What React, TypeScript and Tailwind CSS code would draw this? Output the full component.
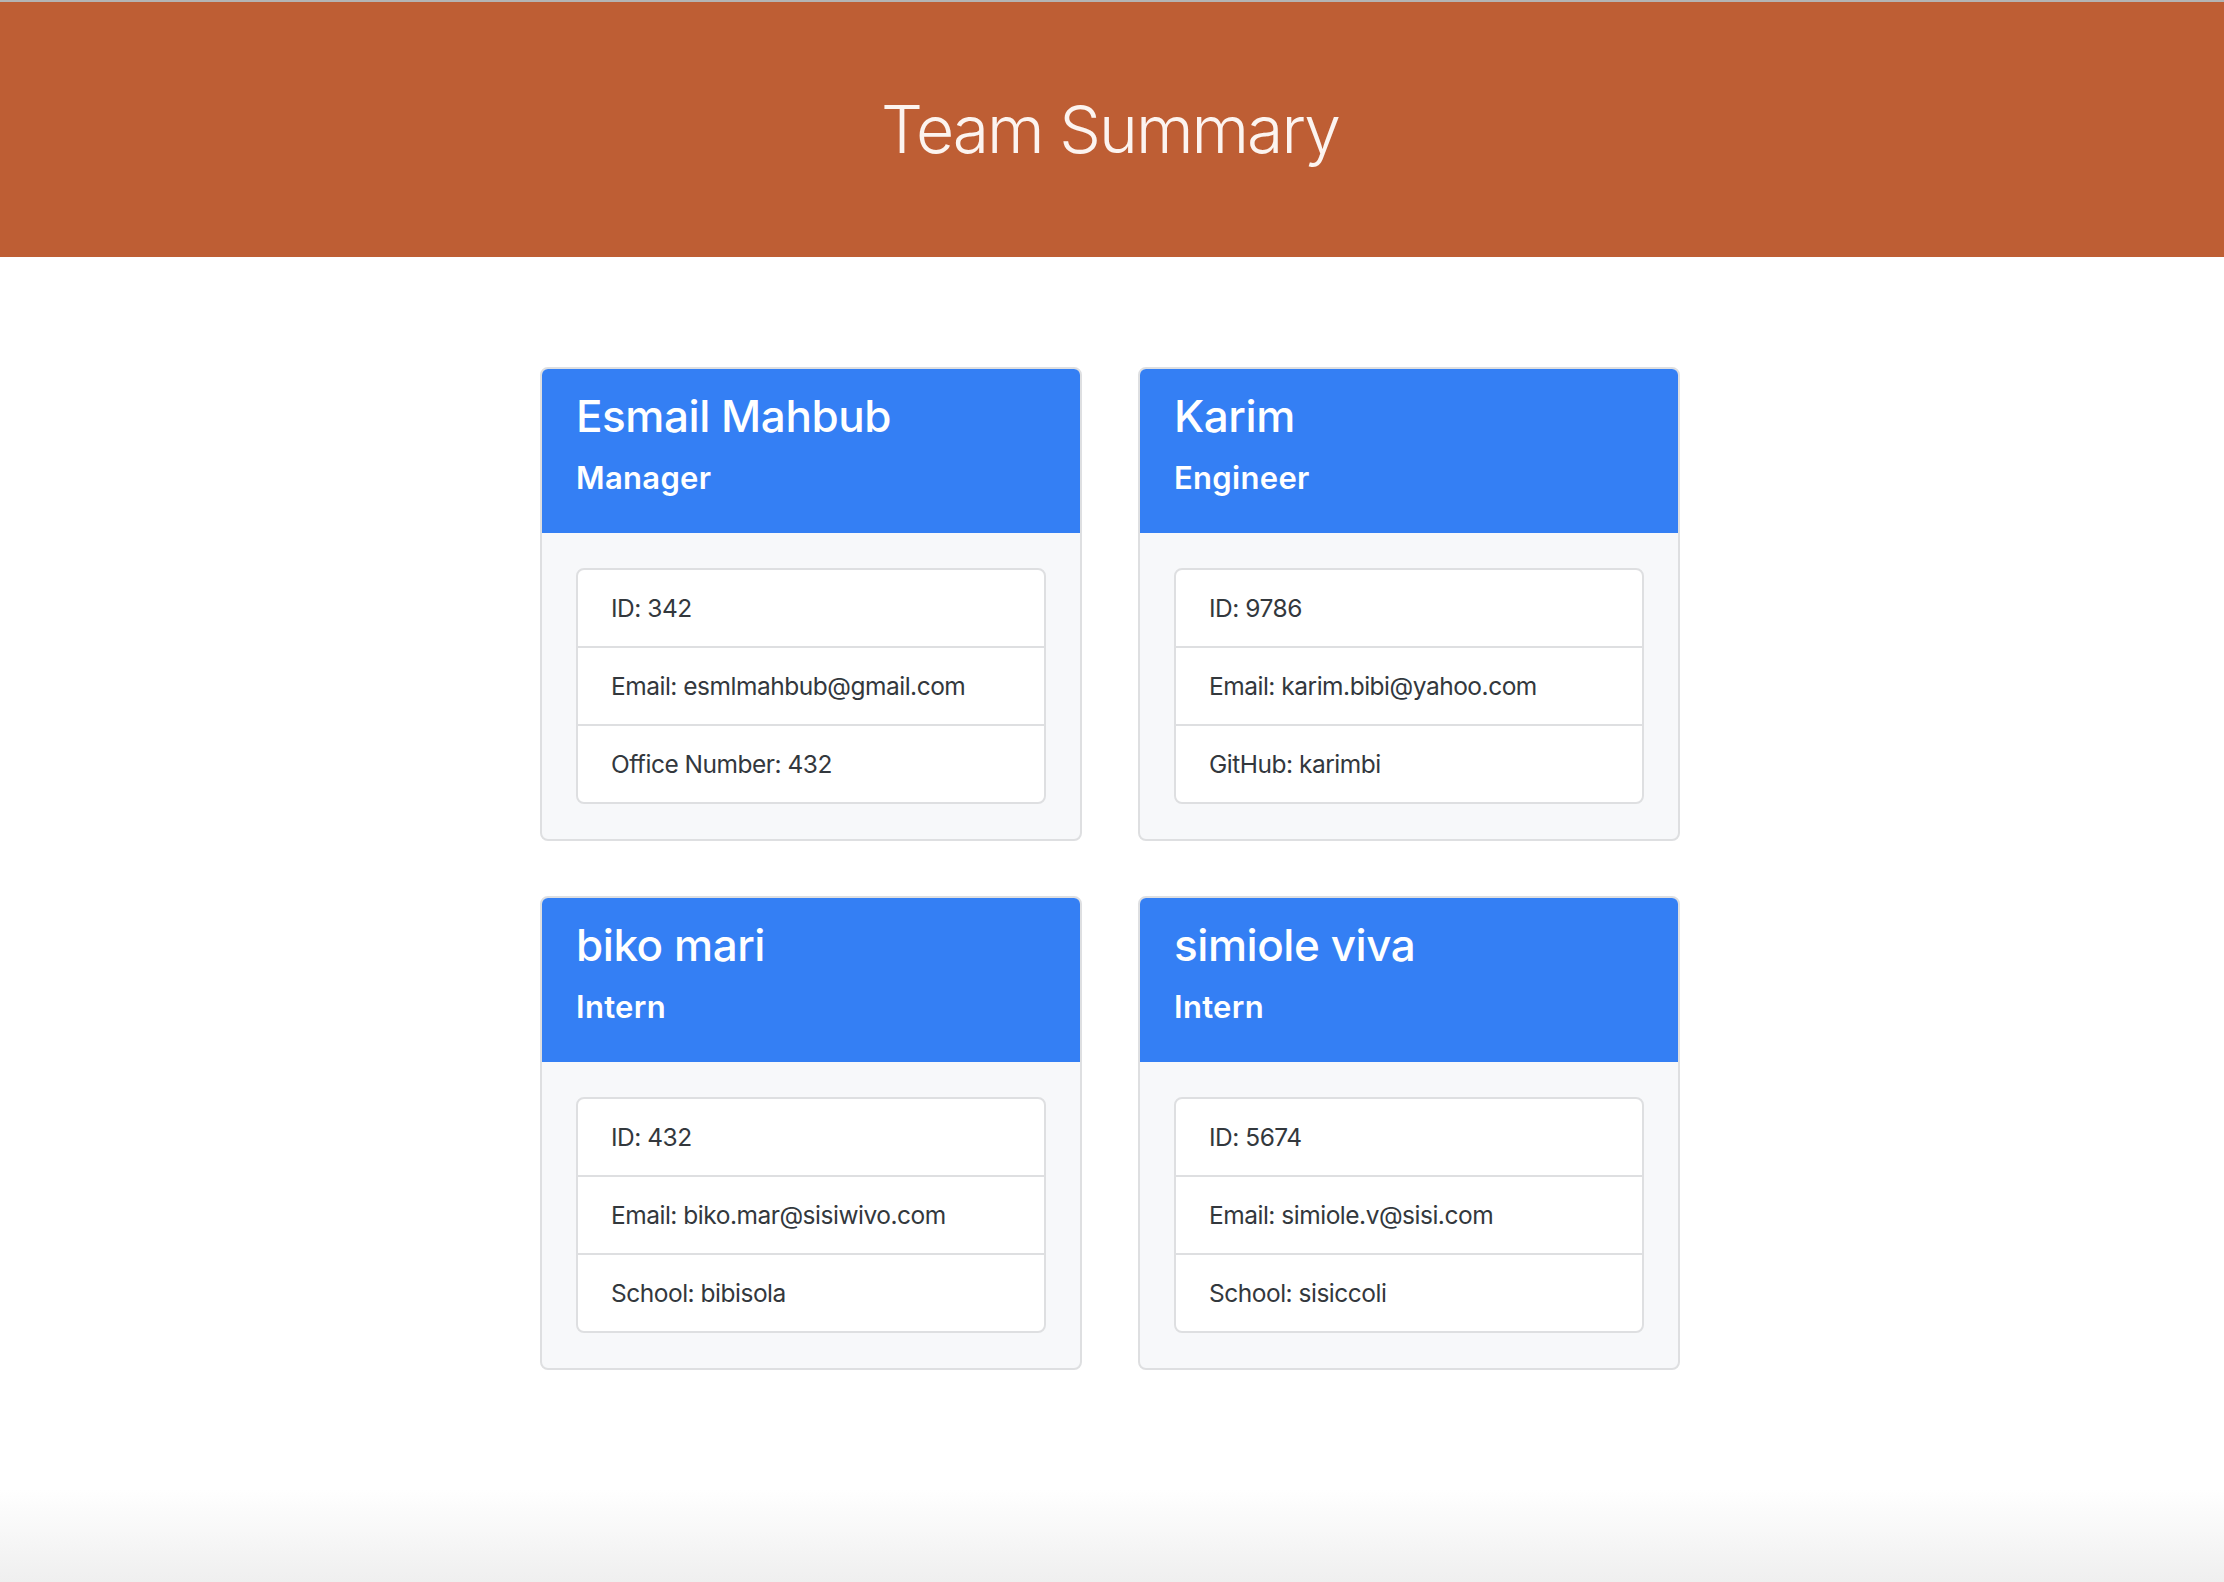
import React from 'react';

type Member = {
  name: string;
  role: string;
  id: string;
  email: string;
  extraLabel: string;
  extraValue: string;
};

const team: Member[] = [
  { name: 'Esmail Mahbub', role: 'Manager', id: '342', email: 'esmlmahbub@gmail.com', extraLabel: 'Office Number', extraValue: '432' },
  { name: 'Karim', role: 'Engineer', id: '9786', email: 'karim.bibi@yahoo.com', extraLabel: 'GitHub', extraValue: 'karimbi' },
  { name: 'biko mari', role: 'Intern', id: '432', email: 'biko.mar@sisiwivo.com', extraLabel: 'School', extraValue: 'bibisola' },
  { name: 'simiole viva', role: 'Intern', id: '5674', email: 'simiole.v@sisi.com', extraLabel: 'School', extraValue: 'sisiccoli' },
];

function MemberCard({ member }: { member: Member }) {
  const rows = [
    `ID: ${member.id}`,
    `Email: ${member.email}`,
    `${member.extraLabel}: ${member.extraValue}`,
  ];

  return (
    <div className="border-2 border-[#dedfe1] rounded-[8px] overflow-hidden bg-[#f7f8fa]">
      <div className="h-[164px] bg-[#347ff4] px-[34px] pt-[21px] text-white">
        <h2 className="text-[44px] leading-[1.2] font-medium tracking-[-0.01em]">{member.name}</h2>
        <h3 className="mt-[16px] text-[31px] leading-[1.2] font-semibold tracking-[0.01em]">{member.role}</h3>
      </div>
      <div className="px-[34px] py-[35px]">
        <ul className="border-2 border-[#dedfe1] rounded-[8px] bg-white">
          {rows.map((row, i) => (
            <li
              key={i}
              className={`flex items-center pl-[33px] text-[24.5px] tracking-[-0.02em] text-[#33383d] ${
                i > 0 ? 'h-[78px] border-t-2 border-[#dedfe1]' : 'h-[76px]'
              }`}
            >
              {row}
            </li>
          ))}
        </ul>
      </div>
    </div>
  );
}

export default function App() {
  return (
    <div className="min-h-[1582px] flex flex-col bg-white pr-[4px] font-['Inter','Liberation_Sans',sans-serif]">
      <header className="h-[257px] -mr-[4px] border-t-2 border-[#b4b4b4] bg-[#be5e34] flex items-center justify-center pr-[4px]">
        <h1 className="text-[66px] leading-[1.2] font-light tracking-[-0.03em] text-[#fcf4f0]">Team Summary</h1>
      </header>

      <main className="flex-1 flex justify-center pt-[110px]">
        <div className="w-[1140px] grid grid-cols-2 gap-x-[56px] gap-y-[55px] content-start">
          {team.map((m) => (
            <MemberCard key={m.name} member={m} />
          ))}
        </div>
      </main>

      <div className="h-[92px] -mr-[4px] bg-gradient-to-b from-white to-[#efefef]" />
    </div>
  );
}
